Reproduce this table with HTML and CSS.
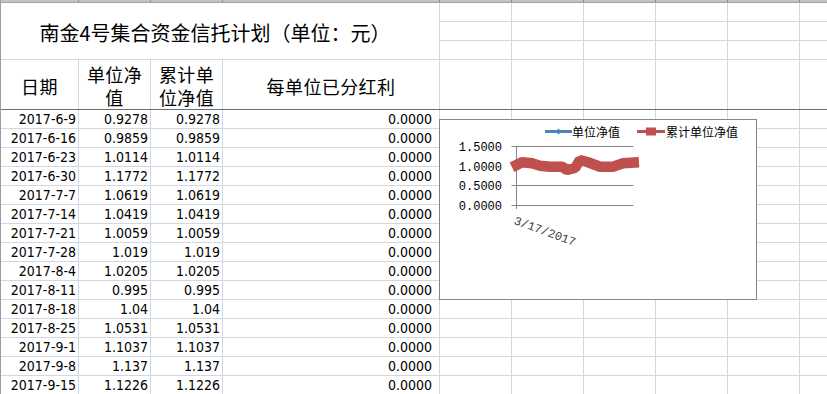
FILE: index.html
```html
<!DOCTYPE html>
<html lang="zh-CN">
<head>
<meta charset="utf-8">
<title>南金4号集合资金信托计划</title>
<link rel="stylesheet" href="styles.css">
</head>
<body>
<div class="sheet">
  <div class="band">
    <i></i><i></i><i></i><i></i><i></i><i></i><i></i><i></i><i></i><i></i>
  </div>
  <div class="grid top">
    <div class="title">南金4号集合资金信托计划（单位：元）</div>
    <div class="c"></div><div class="c"></div><div class="c"></div><div class="c"></div><div class="c"></div><div class="c"></div>
    <div class="c"></div><div class="c"></div><div class="c"></div><div class="c"></div><div class="c"></div><div class="c"></div>
    <div class="c"></div><div class="c"></div><div class="c"></div><div class="c"></div><div class="c"></div><div class="c"></div>
    <div class="h one">日期</div>
    <div class="h two"><span>单位净</span><span>值</span></div>
    <div class="h two"><span>累计单</span><span>位净值</span></div>
    <div class="h one">每单位已分红利</div>
    <div class="c"></div><div class="c"></div><div class="c"></div><div class="c"></div><div class="c"></div><div class="c"></div>
  </div>
  <div class="freeze"></div>
  <div class="grid data">
    <div class="n">2017-6-9</div><div class="n">0.9278</div><div class="n">0.9278</div><div class="n d">0.0000</div><div class="c"></div><div class="c"></div><div class="c"></div><div class="c"></div><div class="c"></div><div class="c"></div>
    <div class="n">2017-6-16</div><div class="n">0.9859</div><div class="n">0.9859</div><div class="n d">0.0000</div><div class="c"></div><div class="c"></div><div class="c"></div><div class="c"></div><div class="c"></div><div class="c"></div>
    <div class="n">2017-6-23</div><div class="n">1.0114</div><div class="n">1.0114</div><div class="n d">0.0000</div><div class="c"></div><div class="c"></div><div class="c"></div><div class="c"></div><div class="c"></div><div class="c"></div>
    <div class="n">2017-6-30</div><div class="n">1.1772</div><div class="n">1.1772</div><div class="n d">0.0000</div><div class="c"></div><div class="c"></div><div class="c"></div><div class="c"></div><div class="c"></div><div class="c"></div>
    <div class="n">2017-7-7</div><div class="n">1.0619</div><div class="n">1.0619</div><div class="n d">0.0000</div><div class="c"></div><div class="c"></div><div class="c"></div><div class="c"></div><div class="c"></div><div class="c"></div>
    <div class="n">2017-7-14</div><div class="n">1.0419</div><div class="n">1.0419</div><div class="n d">0.0000</div><div class="c"></div><div class="c"></div><div class="c"></div><div class="c"></div><div class="c"></div><div class="c"></div>
    <div class="n">2017-7-21</div><div class="n">1.0059</div><div class="n">1.0059</div><div class="n d">0.0000</div><div class="c"></div><div class="c"></div><div class="c"></div><div class="c"></div><div class="c"></div><div class="c"></div>
    <div class="n">2017-7-28</div><div class="n">1.019</div><div class="n">1.019</div><div class="n d">0.0000</div><div class="c"></div><div class="c"></div><div class="c"></div><div class="c"></div><div class="c"></div><div class="c"></div>
    <div class="n">2017-8-4</div><div class="n">1.0205</div><div class="n">1.0205</div><div class="n d">0.0000</div><div class="c"></div><div class="c"></div><div class="c"></div><div class="c"></div><div class="c"></div><div class="c"></div>
    <div class="n">2017-8-11</div><div class="n">0.995</div><div class="n">0.995</div><div class="n d">0.0000</div><div class="c"></div><div class="c"></div><div class="c"></div><div class="c"></div><div class="c"></div><div class="c"></div>
    <div class="n">2017-8-18</div><div class="n">1.04</div><div class="n">1.04</div><div class="n d">0.0000</div><div class="c"></div><div class="c"></div><div class="c"></div><div class="c"></div><div class="c"></div><div class="c"></div>
    <div class="n">2017-8-25</div><div class="n">1.0531</div><div class="n">1.0531</div><div class="n d">0.0000</div><div class="c"></div><div class="c"></div><div class="c"></div><div class="c"></div><div class="c"></div><div class="c"></div>
    <div class="n">2017-9-1</div><div class="n">1.1037</div><div class="n">1.1037</div><div class="n d">0.0000</div><div class="c"></div><div class="c"></div><div class="c"></div><div class="c"></div><div class="c"></div><div class="c"></div>
    <div class="n">2017-9-8</div><div class="n">1.137</div><div class="n">1.137</div><div class="n d">0.0000</div><div class="c"></div><div class="c"></div><div class="c"></div><div class="c"></div><div class="c"></div><div class="c"></div>
    <div class="n">2017-9-15</div><div class="n">1.1226</div><div class="n">1.1226</div><div class="n d">0.0000</div><div class="c"></div><div class="c"></div><div class="c"></div><div class="c"></div><div class="c"></div><div class="c"></div>
  </div>

  <div class="chart">
    <svg width="318" height="181" viewBox="0 0 318 181">
      <rect x="0.5" y="0.5" width="317" height="180" fill="#fff" stroke="#868686"/>
      <line x1="106" y1="12.5" x2="133" y2="12.5" stroke="#4f81bd" stroke-width="3"/>
      <path d="M119.5 9.5 L122.5 12.5 L119.5 15.5 L116.5 12.5 Z" fill="#4f81bd"/>
      <text class="lg" x="133" y="17.5">单位净值</text>
      <line x1="198" y1="12.5" x2="226" y2="12.5" stroke="#c0504d" stroke-width="3"/>
      <rect x="207" y="8.5" width="10" height="8" fill="#c0504d"/>
      <text class="lg" x="227" y="17.5">累计单位净值</text>
      <g stroke="#868686" stroke-width="1">
        <line x1="72.5" y1="27.5" x2="194.5" y2="27.5"/>
        <line x1="72.5" y1="46.5" x2="194.5" y2="46.5"/>
        <line x1="72.5" y1="66.5" x2="194.5" y2="66.5"/>
        <line x1="72.5" y1="86.5" x2="194.5" y2="86.5"/>
        <line x1="77.5" y1="27" x2="77.5" y2="90"/>
      </g>
      <g class="ax">
        <text x="63" y="32">1.5000</text>
        <text x="63" y="52">1.0000</text>
        <text x="63" y="71">0.5000</text>
        <text x="63" y="91">0.0000</text>
      </g>
      <text class="xl" x="106" y="116" transform="rotate(20 106 112)">3/17/2017</text>
      <polyline fill="none" stroke="#4f81bd" stroke-width="3" points="74,48.3 83,43.3 93,44.3 101,46.7 111,47.7 123,47.7 128,51 136,49 141,41 149,43.3 161,47.7 174,47.7 184,44.3 199,43.3"/>
      <polyline fill="none" stroke="#c0504d" stroke-width="10.5" stroke-linejoin="bevel" points="73,48.3 83,43.3 93,44.3 101,46.7 111,47.7 123,47.7 128,51 136,49 141,41 149,43.3 161,47.7 174,47.7 184,44.3 200,43.3"/>
    </svg>
  </div>
</div>
</body>
</html>
```

FILE: styles.css
```css
html, body {
  margin: 0;
  padding: 0;
  background: #fff;
  overflow: hidden;
  width: 827px;
  height: 394px;
}

.sheet {
  position: relative;
  width: 827px;
  height: 394px;
  overflow: hidden;
  border-left: 1px solid #9e9e9e;
  box-sizing: border-box;
  font-family: "DejaVu Sans Condensed", "DejaVu Sans", "Noto Sans CJK SC", sans-serif;
  font-stretch: condensed;
  color: #000;
}

.band {
  display: grid;
  grid-template-columns: 77px 71px 71px 216px repeat(6, 71px);
  column-gap: 1px;
  width: max-content;
  background: #8c8c8c;
  border-bottom: 1px solid #a4a4a4;
}
.band i {
  display: block;
  height: 2px;
  background: #c3c3c3;
}

.grid {
  display: grid;
  grid-template-columns: 77px 71px 71px 216px repeat(6, 71px);
  gap: 1px;
  width: max-content;
  background: #d0d7e5;
}
.top {
  grid-template-rows: 18px 18px 18px 49px;
}
.data {
  grid-auto-rows: 18px;
}

.c, .n, .h, .title {
  background: #fff;
  overflow: hidden;
  white-space: nowrap;
}

.title {
  grid-column: 1 / span 4;
  grid-row: 1 / span 3;
  display: flex;
  align-items: center;
  justify-content: center;
  padding: 3px 10px 0 0;
  font-family: "Noto Sans CJK SC", sans-serif;
  font-size: 20px;
}

.h {
  font-family: "Noto Sans CJK SC", sans-serif;
  font-size: 18px;
  text-align: center;
  letter-spacing: 0.4px;
}
.h.one {
  padding-top: 14px;
  line-height: 24px;
}
.h.two {
  display: flex;
  flex-direction: column;
  align-items: center;
  padding-top: 4px;
  gap: 2px;
}
.h.two span {
  display: block;
  line-height: 21px;
  height: 21px;
}

.freeze {
  height: 1px;
  width: 100%;
  background: #6e6e6e;
}

.n {
  font-size: 14px;
  line-height: 18px;
  text-align: right;
  padding-right: 2px;
}
.n.d { padding-right: 7px; }

.chart {
  position: absolute;
  left: 438px;
  top: 119px;
  width: 318px;
  height: 181px;
}
.chart svg { display: block; }
.lg {
  font-family: "Noto Sans CJK SC", sans-serif;
  font-size: 12px;
  fill: #000;
}
.ax text {
  font-family: "Liberation Mono", monospace;
  font-size: 12px;
  text-anchor: end;
  fill: #000;
}
.xl {
  font-family: "Liberation Mono", monospace;
  font-size: 12px;
  text-anchor: middle;
  fill: #404040;
}
```
